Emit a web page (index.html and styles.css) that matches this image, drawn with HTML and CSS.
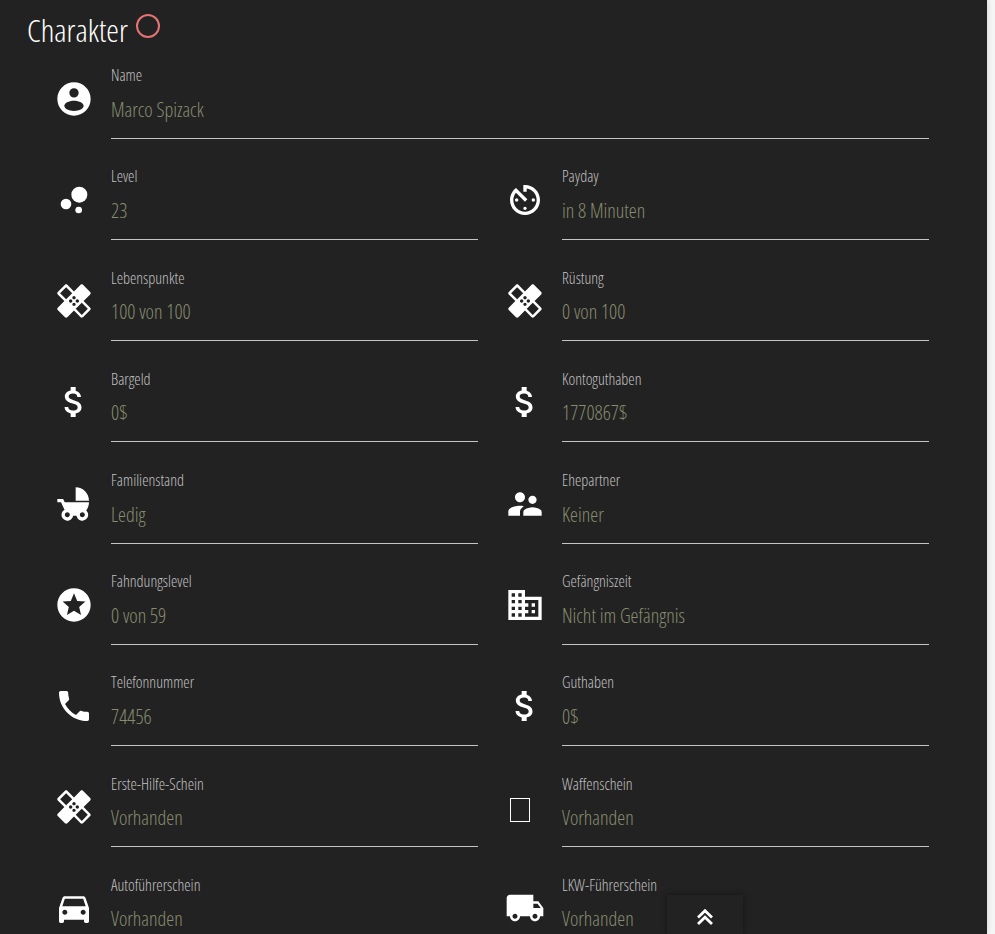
FILE: index.html
```html
<!DOCTYPE html>
<html lang="de">
<head>
<meta charset="utf-8">
<title>Charakter</title>
<link rel="stylesheet" href="styles.css">
</head>
<body>
<main class="panel">
  <h1 class="title">Charakter <span class="ring"></span></h1>
  <div class="grid">
    <div class="cell wide">
      <svg class="icon" viewBox="0 0 24 24"><path fill-rule="evenodd" d="M12 2C6.48 2 2 6.48 2 12s4.48 10 10 10 10-4.48 10-10S17.52 2 12 2zm0 3.5a2.8 2.8 0 1 1 0 5.6 2.8 2.8 0 0 1 0-5.6zM12 13c3.2 0 5.8 1.4 5.8 3.1S15.200 19.200 12 19.200 6.200 17.800 6.200 16.100 8.800 13 12 13z"/></svg>
      <div class="field"><label class="label">Name</label><div class="value">Marco Spizack</div></div>
    </div>
    <div class="cell">
      <svg class="icon" viewBox="0 0 24 24"><circle cx="7.2" cy="14.4" r="3.2"/><circle cx="14.8" cy="18" r="2"/><circle cx="15.2" cy="8.8" r="4.8"/></svg>
      <div class="field"><label class="label">Level</label><div class="value">23</div></div>
    </div>
    <div class="cell">
      <svg class="icon" viewBox="0 0 24 24"><path d="M11 17c0 .55.45 1 1 1s1-.45 1-1-.45-1-1-1-1 .45-1 1zm0-14v4h2V5.080c3.390.490 6 3.390 6 6.920 0 3.870-3.130 7-7 7s-7-3.130-7-7c0-1.680.590-3.220 1.580-4.420L12 13l1.410-1.410-6.800-6.800v.020C4.420 6.450 3 9.050 3 12c0 4.970 4.020 9 9 9 4.970 0 9-4.030 9-9s-4.030-9-9-9h-1zm7 9c0-.550-.450-1-1-1s-1 .450-1 1 .450 1 1 1 1-.450 1-1zM6 12c0 .550.450 1 1 1s1-.450 1-1-.450-1-1-1-1 .450-1 1z"/></svg>
      <div class="field"><label class="label">Payday</label><div class="value">in 8 Minuten</div></div>
    </div>
    <div class="cell">
      <svg class="icon" viewBox="0 0 24 24"><use href="#i-heal"/></svg>
      <div class="field"><label class="label">Lebenspunkte</label><div class="value">100 von 100</div></div>
    </div>
    <div class="cell">
      <svg class="icon" viewBox="0 0 24 24"><use href="#i-heal"/></svg>
      <div class="field"><label class="label">Rüstung</label><div class="value">0 von 100</div></div>
    </div>
    <div class="cell">
      <svg class="icon" viewBox="0 0 24 24"><use href="#i-money"/></svg>
      <div class="field"><label class="label">Bargeld</label><div class="value">0$</div></div>
    </div>
    <div class="cell">
      <svg class="icon" viewBox="0 0 24 24"><use href="#i-money"/></svg>
      <div class="field"><label class="label">Kontoguthaben</label><div class="value">1770867$</div></div>
    </div>
    <div class="cell">
      <svg class="icon" viewBox="0 0 24 24"><path d="M13 2v8h8c0-4.420-3.580-8-8-8zm6.320 13.890C20.370 14.540 21 12.840 21 11H6.440l-.950-2H2v2h2.220s1.890 4.070 2.120 4.420c-1.100.590-1.840 1.750-1.840 3.080C4.500 20.430 6.070 22 8 22c1.760 0 3.220-1.300 3.460-3h2.080c.240 1.700 1.700 3 3.460 3 1.930 0 3.500-1.570 3.500-3.500 0-1.040-.460-1.970-1.180-2.610zM8 20c-.830 0-1.500-.670-1.500-1.500S7.170 17 8 17s1.500.670 1.500 1.500S8.830 20 8 20zm9 0c-.830 0-1.500-.670-1.500-1.500S16.170 17 17 17s1.500.670 1.500 1.500S17.830 20 17 20z"/></svg>
      <div class="field"><label class="label">Familienstand</label><div class="value">Ledig</div></div>
    </div>
    <div class="cell">
      <svg class="icon" viewBox="0 0 24 24"><path d="M16.500 12c1.380 0 2.490-1.120 2.490-2.500S17.880 7 16.500 7C15.120 7 14 8.120 14 9.500s1.120 2.500 2.500 2.500zM9 11c1.660 0 2.990-1.340 2.990-3S10.660 5 9 5C7.340 5 6 6.340 6 8s1.340 3 3 3zm7.500 3c-1.830 0-5.500.920-5.500 2.750V19h11v-2.250c0-1.830-3.670-2.750-5.500-2.750zM9 13c-.290 0-.620.020-.970.050C5.670 13.200 2 14.330 2 16.500V19h7v-2.250c0-.850.330-2.340 2.370-3.470C10.500 13.100 9.660 13 9 13z"/></svg>
      <div class="field"><label class="label">Ehepartner</label><div class="value">Keiner</div></div>
    </div>
    <div class="cell">
      <svg class="icon" viewBox="0 0 24 24"><path d="M11.990 2C6.470 2 2 6.480 2 12s4.470 10 9.990 10C17.520 22 22 17.520 22 12S17.520 2 11.990 2zm4.240 16L12 15.450 7.770 18l1.120-4.810-3.730-3.230 4.920-.420L12 5l1.920 4.530 4.920.420-3.730 3.230L16.230 18z"/></svg>
      <div class="field"><label class="label">Fahndungslevel</label><div class="value">0 von 59</div></div>
    </div>
    <div class="cell">
      <svg class="icon" viewBox="0 0 24 24"><path d="M12 7V3H2v18h20V7H12zM6 19H4v-2h2v2zm0-4H4v-2h2v2zm0-4H4V9h2v2zm0-4H4V5h2v2zm4 12H8v-2h2v2zm0-4H8v-2h2v2zm0-4H8V9h2v2zm0-4H8V5h2v2zm10 12h-8v-2h2v-2h-2v-2h2v-2h-2V9h8v10zm-2-8h-2v2h2v-2zm0 4h-2v2h2v-2z"/></svg>
      <div class="field"><label class="label">Gefängniszeit</label><div class="value">Nicht im Gefängnis</div></div>
    </div>
    <div class="cell">
      <svg class="icon" viewBox="0 0 24 24"><path d="M6.620 10.790c1.440 2.830 3.760 5.140 6.590 6.590l2.200-2.200c.270-.270.670-.360 1.020-.240 1.120.370 2.330.570 3.570.570.550 0 1 .450 1 1V20c0 .550-.450 1-1 1-9.390 0-17-7.610-17-17 0-.550.450-1 1-1h3.500c.550 0 1 .450 1 1 0 1.250.200 2.450.570 3.570.110.350.030.740-.250 1.020l-2.200 2.200z"/></svg>
      <div class="field"><label class="label">Telefonnummer</label><div class="value">74456</div></div>
    </div>
    <div class="cell">
      <svg class="icon" viewBox="0 0 24 24"><use href="#i-money"/></svg>
      <div class="field"><label class="label">Guthaben</label><div class="value">0$</div></div>
    </div>
    <div class="cell">
      <svg class="icon" viewBox="0 0 24 24"><use href="#i-heal"/></svg>
      <div class="field"><label class="label">Erste-Hilfe-Schein</label><div class="value">Vorhanden</div></div>
    </div>
    <div class="cell">
      <span class="icon-slot"><span class="tofu"></span></span>
      <div class="field"><label class="label">Waffenschein</label><div class="value">Vorhanden</div></div>
    </div>
    <div class="cell">
      <svg class="icon" viewBox="0 0 24 24"><path d="M18.920 6.010C18.720 5.420 18.160 5 17.500 5h-11c-.660 0-1.210.420-1.420 1.010L3 12v8c0 .550.450 1 1 1h1c.550 0 1-.450 1-1v-1h12v1c0 .550.450 1 1 1h1c.550 0 1-.450 1-1v-8l-2.080-5.990zM6.500 16c-.830 0-1.500-.670-1.500-1.500S5.670 13 6.500 13s1.500.670 1.500 1.500S7.330 16 6.500 16zm11 0c-.830 0-1.500-.670-1.500-1.500s.670-1.500 1.500-1.500 1.500.670 1.500 1.500-.670 1.500-1.500 1.500zM5 11l1.500-4.500h11L19 11H5z"/></svg>
      <div class="field"><label class="label">Autoführerschein</label><div class="value">Vorhanden</div></div>
    </div>
    <div class="cell">
      <svg class="icon" viewBox="0 0 24 24"><path d="M20 8h-3V4H3c-1.100 0-2 .900-2 2v11h2c0 1.660 1.340 3 3 3s3-1.340 3-3h6c0 1.660 1.340 3 3 3s3-1.340 3-3h2v-5l-3-4zM6 18.500c-.830 0-1.500-.670-1.500-1.500s.670-1.500 1.500-1.500 1.500.670 1.500 1.500-.670 1.500-1.500 1.500zm13.500-9l1.960 2.500H17V9.500h2.500zm-1.500 9c-.830 0-1.500-.670-1.500-1.500s.670-1.500 1.500-1.500 1.500.670 1.500 1.500-.670 1.500-1.500 1.500z"/></svg>
      <div class="field"><label class="label">LKW-Führerschein</label><div class="value">Vorhanden</div></div>
    </div>
  </div>
  <button class="top" type="button" aria-label="Nach oben">
    <svg class="top-icon" viewBox="0 0 18 18"><path d="M2 9.500 9 2.800l7 6.700M2 16 9 9.300l7 6.700"/></svg>
  </button>
</main>
<svg class="defs" aria-hidden="true">
  <defs>
    <path id="i-heal" d="M17.730 12.020l3.980-3.980c.390-.390.390-1.020 0-1.410l-4.340-4.340c-.390-.390-1.020-.390-1.410 0l-3.980 3.980L8 2.290C7.800 2.100 7.550 2 7.290 2c-.250 0-.510.100-.700.290L2.250 6.630c-.390.390-.390 1.020 0 1.410l3.980 3.980L2.250 16c-.390.390-.390 1.020 0 1.410l4.340 4.340c.390.390 1.020.390 1.410 0l3.980-3.980 3.980 3.980c.200.200.450.290.710.290.260 0 .510-.100.710-.290l4.340-4.340c.390-.390.390-1.020 0-1.410l-3.980-3.980zM12 9c.550 0 1 .450 1 1s-.450 1-1 1-1-.450-1-1 .450-1 1-1zm-4.710 1.960L3.660 7.340l3.630-3.630 3.620 3.620-3.620 3.630zM10 13c-.550 0-1-.450-1-1s.450-1 1-1 1 .450 1 1-.450 1-1 1zm2 2c-.550 0-1-.450-1-1s.450-1 1-1 1 .450 1 1-.450 1-1 1zm2-4c.550 0 1 .450 1 1s-.450 1-1 1-1-.450-1-1 .450-1 1-1zm2.660 9.340l-3.630-3.620 3.630-3.630 3.620 3.620-3.620 3.630z"/>
    <path id="i-money" d="M11.800 10.900c-2.270-.590-3-1.200-3-2.150 0-1.090 1.010-1.850 2.700-1.850 1.780 0 2.440.850 2.500 2.100h2.210c-.070-1.720-1.120-3.300-3.210-3.810V3h-3v2.160c-1.940.420-3.500 1.680-3.500 3.610 0 2.310 1.910 3.460 4.700 4.130 2.500.600 3 1.480 3 2.410 0 .690-.490 1.790-2.700 1.790-2.060 0-2.870-.920-2.980-2.100h-2.200c.120 2.190 1.760 3.420 3.680 3.830V21h3v-2.150c1.950-.370 3.500-1.500 3.500-3.550 0-2.840-2.430-3.810-4.700-4.400z"/>
  </defs>
</svg>
</body>
</html>
```

FILE: styles.css
```css
html, body {
  margin: 0;
  height: 100%;
  overflow: hidden;
  background: #f5f5f5;
}
body {
  font-family: "Open Sans", "Liberation Sans", sans-serif;
  font-stretch: 75%;
  font-weight: 300;
}
.panel {
  position: relative;
  width: 987px;
  height: 934px;
  overflow: hidden;
  box-sizing: border-box;
  padding: 0 0 0 27px;
  background: #222;
  box-shadow: 0 0 6px rgba(0, 0, 0, .15);
}
.title {
  margin: 0;
  height: 64.8px;
  padding-top: 12px;
  box-sizing: border-box;
  color: #fff;
  font-size: 32px;
  line-height: 36px;
  font-weight: 300;
}
.ring {
  display: inline-block;
  width: 20px;
  height: 20px;
  margin-left: 2px;
  border: 2px solid #e57373;
  border-radius: 50%;
  vertical-align: 4px;
}
.grid {
  display: grid;
  grid-template-columns: 451px 451px;
  grid-auto-rows: 101.2px;
}
.cell {
  display: flex;
  align-items: flex-start;
}
.wide {
  grid-column: 1 / -1;
}
.icon, .icon-slot {
  flex: none;
  width: 40px;
  height: 40px;
  margin: 14px 17px 0 27px;
  fill: #fff;
}
.icon-slot {
  display: block;
  box-sizing: border-box;
  padding: 11px 0 0 5px;
}
.tofu {
  display: block;
  width: 20px;
  height: 24px;
  box-sizing: border-box;
  border: 1px solid #fff;
}
.field {
  flex: 1;
  height: 74px;
  box-sizing: border-box;
  border-bottom: 1px solid #c4c4c4;
}
.label {
  display: block;
  margin-top: .5px;
  color: #c0c0c0;
  font-size: 16px;
  line-height: 20px;
  font-weight: 300;
}
.value {
  margin-top: 12.5px;
  color: #868d6e;
  font-size: 20px;
  line-height: 24px;
  font-weight: 300;
}
.top {
  position: absolute;
  left: 667px;
  top: 895px;
  width: 76px;
  height: 39px;
  border: 0;
  padding: 0;
  background: #222;
  box-shadow: 0 0 6px rgba(0, 0, 0, .45);
}
.top-icon {
  display: block;
  width: 18px;
  height: 18px;
  margin: 0 auto;
  fill: none;
  stroke: #fff;
  stroke-width: 2.8;
  position: relative;
  top: 2px;
}
.defs {
  position: absolute;
  width: 0;
  height: 0;
}
```
